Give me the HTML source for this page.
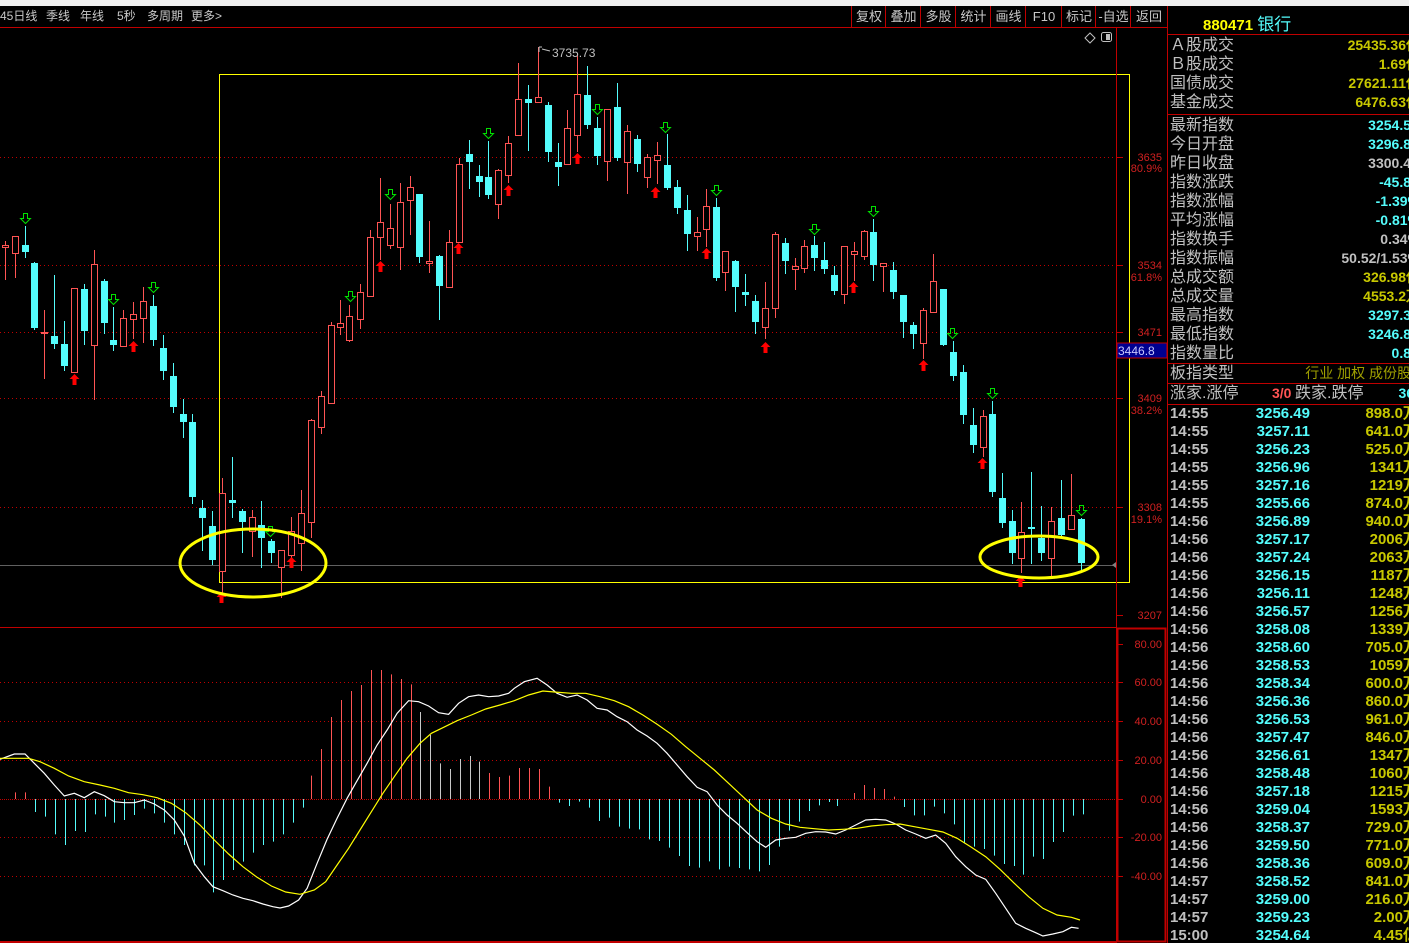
<!DOCTYPE html>
<html><head><meta charset="utf-8">
<style>
html,body{margin:0;padding:0;background:#000;width:1409px;height:943px;overflow:hidden;position:relative;font-family:"Liberation Sans","WenQuanYi Zen Hei",sans-serif;}
#top{position:absolute;left:0;top:0;width:1409px;height:6px;background:#f0f0f0;}
#tb{position:absolute;left:0;top:6px;height:21px;width:1168px;color:#c8c8c8;font-size:12px;line-height:21px;}
#tb span{position:absolute;top:0;}
.btn{position:absolute;top:6px;height:21px;line-height:21px;color:#c8c8c8;font-size:13px;text-align:center;border-left:1px solid #c00000;}
#rp{position:absolute;left:1168px;top:6px;width:241px;height:937px;}
.row{position:absolute;left:2px;width:260px;height:19px;font-size:16px;line-height:19px;color:#c0c0c0;white-space:nowrap;}
.row b{position:absolute;right:10px;top:0;font-size:14px;font-weight:bold;}
.y{color:#c8c800}.c{color:#54fcfc}.g{color:#c0c0c0}
.hl{position:absolute;left:0;width:241px;height:1px;background:#c00000;}
.tr{position:absolute;left:2px;width:260px;height:18px;font-size:15px;font-weight:bold;line-height:18px;white-space:nowrap;}
.tr .t{position:absolute;left:0;color:#c0c0c0;}
.tr .p{position:absolute;right:120px;color:#54fcfc;}
.tr .v{position:absolute;right:12px;color:#c8c800;}
</style></head><body>
<div id="top"></div>
<div id="tb">
<span style="left:0">45日线</span><span style="left:46px">季线</span><span style="left:80px">年线</span><span style="left:117px">5秒</span><span style="left:147px">多周期</span><span style="left:191px">更多&gt;</span>
</div>
<div class="btn" style="left:851px;width:34px">复权</div>
<div class="btn" style="left:885px;width:35px">叠加</div>
<div class="btn" style="left:920px;width:35px">多股</div>
<div class="btn" style="left:955px;width:35px">统计</div>
<div class="btn" style="left:990px;width:35px">画线</div>
<div class="btn" style="left:1025px;width:36px">F10</div>
<div class="btn" style="left:1061px;width:34px">标记</div>
<div class="btn" style="left:1095px;width:35px">-自选</div>
<div class="btn" style="left:1130px;width:36px;border-right:1px solid #c00000">返回</div>

<svg id="ch" width="1409" height="943" style="position:absolute;left:0;top:0" xmlns="http://www.w3.org/2000/svg">
<line x1="0" y1="27.5" x2="1168" y2="27.5" stroke="#c00000"/>
<g stroke="#c00000" stroke-dasharray="1,3">
<line x1="0" y1="157.5" x2="1116" y2="157.5"/><line x1="0" y1="265.5" x2="1116" y2="265.5"/>
<line x1="0" y1="332.5" x2="1116" y2="332.5"/><line x1="0" y1="398.5" x2="1116" y2="398.5"/>
<line x1="0" y1="507.5" x2="1116" y2="507.5"/>
<line x1="0" y1="682.5" x2="1116" y2="682.5"/><line x1="0" y1="721.5" x2="1116" y2="721.5"/>
<line x1="0" y1="760.5" x2="1116" y2="760.5"/><line x1="0" y1="837.5" x2="1116" y2="837.5"/>
<line x1="0" y1="876.5" x2="1116" y2="876.5"/>
</g>
<line x1="0" y1="799.5" x2="1116" y2="799.5" stroke="#c00000" stroke-dasharray="1,1"/>
<line x1="0" y1="565.5" x2="1116" y2="565.5" stroke="#606060"/>
<polygon points="1112,565 1116,562 1116,568" fill="#808080"/>
<rect x="219.5" y="74.5" width="910" height="508" fill="none" stroke="#ffff00"/>
<line x1="0" y1="627.5" x2="1116" y2="627.5" stroke="#c00000"/>
<line x1="1116.5" y1="28" x2="1116.5" y2="943" stroke="#c00000"/>
<line x1="1167.5" y1="6" x2="1167.5" y2="943" stroke="#c00000"/>
<rect x="1117.5" y="628.5" width="48" height="313" fill="none" stroke="#c00000" stroke-width="2"/>
<line x1="0" y1="942" x2="1116" y2="942" stroke="#c00000" stroke-width="2"/>
<g id="candles"></g>
<g id="macd"></g>
<g id="arrows"></g>
<ellipse cx="253" cy="563" rx="73" ry="34" fill="none" stroke="#ffff00" stroke-width="3"/>
<ellipse cx="1039" cy="557" rx="59" ry="21" fill="none" stroke="#ffff00" stroke-width="3"/>
<g font-family="Liberation Sans,sans-serif" font-size="11" fill="#d02020" text-anchor="end">
<text x="1162" y="161">3635</text><text x="1162" y="172">80.9%</text>
<text x="1162" y="269">3534</text><text x="1162" y="281">61.8%</text>
<text x="1162" y="336">3471</text>
<text x="1162" y="402">3409</text><text x="1162" y="414">38.2%</text>
<text x="1162" y="511">3308</text><text x="1162" y="523">19.1%</text>
<text x="1162" y="619">3207</text>
<text x="1162" y="648">80.00</text><text x="1162" y="686">60.00</text>
<text x="1162" y="725">40.00</text><text x="1162" y="764">20.00</text>
<text x="1162" y="803">0.00</text><text x="1162" y="841">-20.00</text>
<text x="1162" y="880">-40.00</text>
</g>
<g stroke="#c00000">
<line x1="1117" y1="157.5" x2="1123" y2="157.5"/><line x1="1117" y1="265.5" x2="1123" y2="265.5"/>
<line x1="1117" y1="332.5" x2="1123" y2="332.5"/><line x1="1117" y1="398.5" x2="1123" y2="398.5"/>
<line x1="1117" y1="507.5" x2="1123" y2="507.5"/><line x1="1117" y1="615.5" x2="1123" y2="615.5"/>
<line x1="1118" y1="644.5" x2="1123" y2="644.5"/><line x1="1118" y1="682.5" x2="1123" y2="682.5"/>
<line x1="1118" y1="721.5" x2="1123" y2="721.5"/><line x1="1118" y1="760.5" x2="1123" y2="760.5"/>
<line x1="1118" y1="799.5" x2="1123" y2="799.5"/><line x1="1118" y1="837.5" x2="1123" y2="837.5"/>
<line x1="1118" y1="876.5" x2="1123" y2="876.5"/>
</g>
<rect x="1117" y="343" width="50" height="15" fill="#000090" stroke="#c00000"/>
<text x="1118" y="355" font-family="Liberation Sans,sans-serif" font-size="12" fill="#c8c8ff">3446.8</text>
<text x="552" y="57" font-family="Liberation Sans,sans-serif" font-size="12" fill="#c0c0c0">3735.73</text>
<path d="M539,47 L539,52 M539,47 L542,47 M542,49 L550,51" stroke="#c0c0c0" fill="none"/>
<polygon points="1090,33 1095,38 1090,43 1085,38" fill="none" stroke="#c0c0c0"/>
<rect x="1101.5" y="32.5" width="10" height="9" rx="2" fill="none" stroke="#c0c0c0"/>
<rect x="1106" y="34" width="4" height="6" fill="#c0c0c0"/>
</svg>

<div id="rp">
<div style="position:absolute;left:35px;top:4px;font-size:15px;font-weight:bold;color:#ffff00">880471 <span style="color:#54fcfc;font-weight:normal;font-size:17px">银行</span></div>
<div class="hl" style="top:28px"></div>
<div class="row" style="top:30px">Ａ股成交<b class="y">25435.36亿</b></div>
<div class="row" style="top:49px">Ｂ股成交<b class="y">1.69亿</b></div>
<div class="row" style="top:68px">国债成交<b class="y">27621.11亿</b></div>
<div class="row" style="top:87px">基金成交<b class="y">6476.63亿</b></div>
<div class="hl" style="top:108px"></div>
<div class="row" style="top:110px">最新指数<b class="c" style="right:19px">3254.5</b></div>
<div class="row" style="top:129px">今日开盘<b class="c" style="right:19px">3296.8</b></div>
<div class="row" style="top:148px">昨日收盘<b class="g" style="right:19px">3300.4</b></div>
<div class="row" style="top:167px">指数涨跌<b class="c" style="right:19px">-45.8</b></div>
<div class="row" style="top:186px">指数涨幅<b class="c">-1.39%</b></div>
<div class="row" style="top:205px">平均涨幅<b class="c">-0.81%</b></div>
<div class="row" style="top:224px">指数换手<b class="g">0.34%</b></div>
<div class="row" style="top:243px">指数振幅<b class="g">50.52/1.53%</b></div>
<div class="row" style="top:262px">总成交额<b class="y">326.98亿</b></div>
<div class="row" style="top:281px">总成交量<b class="y">4553.2万</b></div>
<div class="row" style="top:300px">最高指数<b class="c" style="right:19px">3297.3</b></div>
<div class="row" style="top:319px">最低指数<b class="c" style="right:19px">3246.8</b></div>
<div class="row" style="top:338px">指数量比<b class="c" style="right:19px">0.8</b></div>
<div class="hl" style="top:357px"></div>
<div class="row" style="top:358px">板指类型<b style="right:19px;color:#a0a000;font-weight:normal;font-size:14px">行业 加权 成份股</b></div>
<div class="hl" style="top:377px"></div>
<div class="row" style="top:378px">涨家.涨停<span style="position:absolute;left:102px;font-size:14px;font-weight:bold;color:#ff5454">3/0</span><span style="position:absolute;left:125px">跌家.跌停</span><b class="c" style="right:12px">36/</b></div>
<div class="hl" style="top:398px"></div>
<div id="tl"></div>
</div>

<script>
var NS="http://www.w3.org/2000/svg";
function el(p,n,a){var e=document.createElementNS(NS,n);for(var k in a)e.setAttribute(k,a[k]);p.appendChild(e);return e;}
var C=[[5,245,247,241,280,'r'],[15,236,253,236,278,'r'],[25,245,252,226,258,'c'],[34,263,328,262,330,'c'],[44,332,333,310,379,'r'],[54,336,344,275,349,'c'],[64,344,366,321,371,'c'],[74,288,372,288,372,'r'],[84,289,331,284,345,'c'],[94,264,345,250,400,'r'],[104,281,323,279,334,'c'],[113,340,345,307,351,'c'],[123,318,346,310,346,'r'],[133,314,319,302,339,'r'],[143,301,318,287,343,'r'],[153,306,340,295,346,'c'],[163,348,371,335,380,'c'],[173,376,407,363,413,'c'],[183,414,422,399,438,'c'],[192,422,497,414,504,'c'],[202,508,518,500,551,'c'],[212,526,560,511,565,'c'],[222,493,571,478,600,'r'],[232,500,503,457,518,'c'],[242,511,522,509,553,'c'],[252,517,531,510,557,'r'],[261,525,538,501,568,'c'],[271,541,553,539,563,'c'],[281,550,567,550,598,'r'],[291,531,555,517,566,'r'],[301,513,543,490,571,'r'],[311,420,522,419,538,'r'],[321,396,427,391,434,'r'],[331,325,403,322,404,'r'],
[340,323,327,300,335,'r'],[349,316,340,305,342,'r'],[360,292,319,284,329,'r'],[370,237,296,230,297,'r'],[380,222,237,178,260,'r'],[390,228,245,204,249,'r'],[400,202,247,183,270,'r'],[410,187,200,176,235,'r'],[419,194,257,194,263,'c'],[429,261,263,221,273,'r'],[439,256,286,255,320,'c'],[449,242,287,230,287,'r'],[459,164,242,158,242,'r'],[469,154,162,140,189,'c'],[479,176,182,165,197,'c'],[488,177,195,141,199,'c'],[498,170,204,169,219,'r'],[508,143,175,136,183,'r'],[518,99,135,63,135,'r'],[528,99,103,85,151,'c'],[538,97,102,47,102,'r'],[548,105,152,102,162,'c'],[558,162,167,143,186,'c'],[567,128,164,110,164,'r'],[577,94,135,53,152,'r'],[587,95,125,66,129,'c'],[597,128,156,117,165,'c'],[607,109,161,109,181,'r'],[617,107,158,83,161,'c'],[627,131,162,125,194,'r'],[637,139,164,135,172,'c'],[647,157,177,154,188,'r'],[657,155,160,142,184,'r'],[667,165,188,134,190,'c'],[677,187,208,180,214,'c'],[687,210,234,195,251,'c'],[697,232,236,217,251,'r'],
[706,206,229,189,247,'r'],[716,207,278,198,281,'c'],[725,251,272,251,291,'r'],[735,261,287,260,312,'c'],[745,292,295,274,306,'c'],[755,301,322,295,334,'c'],[765,308,327,282,339,'r'],[775,234,308,232,318,'r'],[785,243,261,238,274,'c'],[795,266,269,258,290,'r'],[804,246,268,240,273,'r'],[814,245,258,236,271,'c'],[824,260,269,242,274,'c'],[834,275,291,266,295,'c'],[844,246,294,246,304,'r'],[854,251,254,242,281,'r'],[864,231,256,230,260,'r'],[873,232,265,219,281,'c'],[883,263,266,263,292,'r'],[893,270,292,262,299,'c'],[903,295,322,295,338,'c'],[913,325,334,322,349,'c'],[923,310,343,308,359,'r'],[933,281,312,254,312,'r'],[943,289,345,289,346,'c'],[953,352,376,341,381,'c'],[963,372,415,365,424,'c'],[973,425,445,408,453,'c'],[983,416,447,410,457,'r'],[992,414,492,401,497,'c'],[1002,498,523,473,528,'c'],[1012,521,553,510,564,'c'],[1021,532,558,502,573,'r'],[1031,527,529,472,564,'c'],[1041,538,553,506,561,'c'],[1051,521,558,507,577,'r'],[1061,518,535,480,537,'c'],[1071,515,529,474,529,'r'],[1081,519,563,518,571,'c']];
var g=document.getElementById('candles');
C.forEach(function(d){var x=d[0],col=d[5]=='r'?'#ff5454':'#54fcfc';
 if(d[5]=='r'){el(g,'line',{x1:x+.5,y1:d[3],x2:x+.5,y2:d[1],stroke:col});el(g,'line',{x1:x+.5,y1:d[2],x2:x+.5,y2:d[4],stroke:col});
  el(g,'rect',{x:x-2.5,y:d[1]+.5,width:6,height:Math.max(d[2]-d[1],1),fill:'#000',stroke:col});}
 else{el(g,'line',{x1:x+.5,y1:d[3],x2:x+.5,y2:d[4],stroke:col});el(g,'rect',{x:x-3,y:d[1],width:7,height:Math.max(d[2]-d[1],2),fill:col});}
});
var a=document.getElementById('arrows');
[[74,374],[133,341],[291,557],[380,261],[458,243],[508,185],[577,153],[655,187],[706,248],[765,342],[853,282],[923,360],[982,458],[221,592],[1020,576]].forEach(function(p){var x=p[0]+.5,y=p[1];
 el(a,'polygon',{points:[x,y,x+5,y+5,x+2,y+5,x+2,y+11,x-2,y+11,x-2,y+5,x-5,y+5].join(','),fill:'#ff0000'});});
[[25,213],[113,294],[153,282],[270,526],[350,291],[390,189],[488,128],[597,104],[665,122],[716,185],[814,224],[873,206],[952,328],[992,388],[1081,505]].forEach(function(p){var x=p[0]+.5,y=p[1]+.5;
 el(a,'polygon',{points:[x-2,y,x+2,y,x+2,y+5,x+5,y+5,x,y+10,x-5,y+5,x-2,y+5].join(','),fill:'none',stroke:'#00e000'});});
var m=document.getElementById('macd');
var H=[[21,487],[35,487],[49,546],[63,560],[77,613],[91,645],[105,603],[119,606],[133,553],[147,560],[159,578],[173,570],[187,555],[201,536],[215,550],[229,578],[243,613],[257,645],[271,706],[285,706],[298,787],[312,750],[326,720],[340,695],[354,668],[368,645],[382,635],[396,613],[410,578],[424,533],[436,437],[450,357],[464,261],[477,210],[491,183],[505,165],[519,120],[533,120],[547,133],[561,147],[575,163],[588,246],[602,315],[616,400],[630,417],[644,387],[658,378],[671,395],[685,429],[699,441],[713,437],[727,414],[741,414],[755,417],[768,470],[782,518],[796,528],[810,515],[824,533],[838,573],[852,563],[866,590],[880,596],[894,598],[908,628],[922,633],[936,653],[950,678],[964,708],[978,713],[992,694],[1006,718],[1020,710],[1034,714],[1048,718],[1062,724],[1076,705],[1090,650],[1104,602],[1118,575],[1132,543],[1146,526],[1160,516],[1172,528],[1196,489],[1210,465],[1224,474],[1238,477],[1252,500],[1266,531],[1280,556],[1294,556],[1308,530],[1322,550],[1336,583],[1350,640],[1364,650],[1378,657],[1392,677],[1406,702],[1420,708],[1432,734],[1446,680],[1460,687],[1474,636],[1488,606],[1502,557],[1516,553]];
H.forEach(function(h){var x=Math.round(h[0]/1.4)+.5,y=630+h[1]/3;
 var neg=y>799, shrink=(h[0]>=588&&h[0]<=671);
 el(m,'line',{x1:x,y1:799,x2:x,y2:y,stroke:neg?'#54fcfc':(shrink?'#c8c8c8':'#ff5454')});});
function pl(pts,col){el(m,'polyline',{points:pts.map(function(p){return (p[0]/1.4).toFixed(1)+','+(630+p[1]/3).toFixed(1)}).join(' '),fill:'none',stroke:col,'stroke-width':1.2});}
pl([[0,388],[20,372],[35,372],[48,400],[62,430],[76,465],[90,498],[104,490],[118,503],[132,485],[146,497],[160,515],[174,518],[188,518],[202,510],[216,522],[230,540],[244,570],[258,618],[272,700],[286,740],[298,770],[312,782],[326,795],[340,805],[354,812],[368,822],[382,830],[392,834],[404,828],[418,810],[430,775],[444,700],[458,628],[472,565],[486,505],[500,452],[514,400],[528,345],[542,300],[556,250],[572,212],[586,215],[600,228],[614,248],[628,253],[642,220],[656,200],[670,195],[684,200],[698,198],[712,190],[720,175],[734,155],[752,145],[766,165],[780,190],[794,202],[808,195],[822,210],[836,235],[850,240],[864,260],[878,275],[892,300],[906,318],[920,340],[934,370],[948,405],[962,440],[976,472],[990,485],[1004,525],[1018,555],[1032,580],[1046,608],[1060,635],[1072,652],[1086,630],[1100,625],[1114,622],[1128,610],[1142,605],[1156,606],[1170,612],[1184,600],[1198,585],[1212,570],[1226,568],[1240,570],[1254,582],[1268,600],[1282,612],[1296,625],[1310,615],[1324,640],[1338,680],[1352,710],[1366,735],[1380,748],[1394,790],[1408,835],[1422,880],[1436,895],[1450,908],[1460,918],[1474,912],[1488,905],[1500,892],[1510,895]],'#ffffff');
pl([[0,385],[40,385],[56,395],[76,415],[96,438],[118,455],[140,465],[160,475],[180,488],[200,494],[220,503],[240,520],[260,548],[280,585],[300,630],[320,672],[340,710],[360,742],[380,768],[400,786],[420,793],[440,780],[456,755],[472,705],[488,655],[504,600],[520,545],[536,490],[552,440],[570,385],[588,340],[604,310],[620,293],[640,272],[660,255],[680,237],[700,225],[720,212],[740,195],[760,183],[776,186],[800,190],[820,190],[840,200],[860,212],[880,230],[900,255],[920,283],[940,313],[960,350],[980,385],[1000,420],[1020,460],[1040,500],[1060,540],[1080,565],[1100,582],[1120,592],[1140,596],[1160,600],[1180,598],[1200,595],[1220,588],[1240,584],[1260,582],[1280,590],[1300,598],[1320,606],[1340,625],[1360,652],[1380,680],[1400,718],[1420,760],[1440,800],[1460,835],[1480,855],[1500,862],[1512,870]],'#ffff00');
var T=[['14:55','3256.49','898.0万'],['14:55','3257.11','641.0万'],['14:55','3256.23','525.0万'],['14:55','3256.96','1341万'],['14:55','3257.16','1219万'],['14:55','3255.66','874.0万'],['14:56','3256.89','940.0万'],['14:56','3257.17','2006万'],['14:56','3257.24','2063万'],['14:56','3256.15','1187万'],['14:56','3256.11','1248万'],['14:56','3256.57','1256万'],['14:56','3258.08','1339万'],['14:56','3258.60','705.0万'],['14:56','3258.53','1059万'],['14:56','3258.34','600.0万'],['14:56','3256.36','860.0万'],['14:56','3256.53','961.0万'],['14:56','3257.47','846.0万'],['14:56','3256.61','1347万'],['14:56','3258.48','1060万'],['14:56','3257.18','1215万'],['14:56','3259.04','1593万'],['14:56','3258.37','729.0万'],['14:56','3259.50','771.0万'],['14:56','3258.36','609.0万'],['14:57','3258.52','841.0万'],['14:57','3259.00','216.0万'],['14:57','3259.23','2.00万'],['15:00','3254.64','4.45亿']];
var tl=document.getElementById('tl'),h='';
T.forEach(function(r,i){h+='<div class="tr" style="top:'+(399+i*18)+'px"><span class="t">'+r[0]+'</span><span class="p">'+r[1]+'</span><span class="v">'+r[2]+'</span></div>';});
tl.innerHTML=h;
</script>
</body></html>
